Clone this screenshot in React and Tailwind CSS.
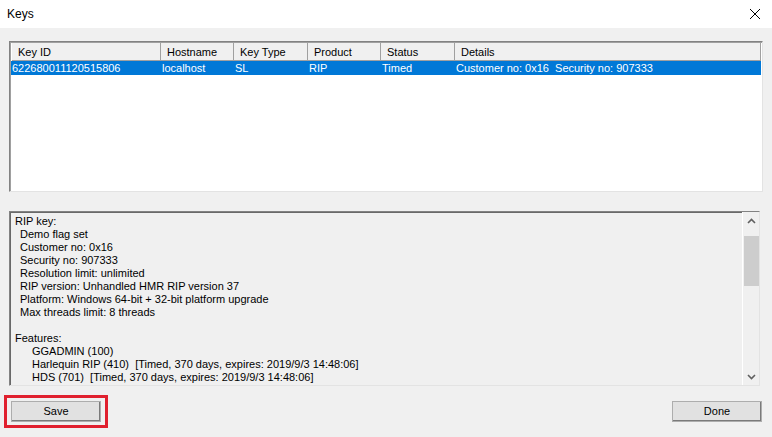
const cols = [
  { label: 'Key ID', w: 'w-[149px]', v: '622680011120515806' },
  { label: 'Hostname', w: 'w-[73px]', v: 'localhost' },
  { label: 'Key Type', w: 'w-[74px]', v: 'SL' },
  { label: 'Product', w: 'w-[73px]', v: 'RIP' },
  { label: 'Status', w: 'w-[74px]', v: 'Timed' },
  { label: 'Details', w: 'flex-1', v: 'Customer no: 0x16  Security no: 907333' },
];

const lines = [
  ['pl-[5px]', 'RIP key:'],
  ['pl-[10px]', 'Demo flag set'],
  ['pl-[10px]', 'Customer no: 0x16'],
  ['pl-[10px]', 'Security no: 907333'],
  ['pl-[10px]', 'Resolution limit: unlimited'],
  ['pl-[10px]', 'RIP version: Unhandled HMR RIP version 37'],
  ['pl-[10px]', 'Platform: Windows 64-bit + 32-bit platform upgrade'],
  ['pl-[10px]', 'Max threads limit: 8 threads'],
  ['pl-[10px]', ' '],
  ['pl-[5px]', 'Features:'],
  ['pl-[22px]', 'GGADMIN (100)'],
  ['pl-[22px]', 'Harlequin RIP (410)  [Timed, 370 days, expires: 2019/9/3 14:48:06]'],
  ['pl-[22px]', 'HDS (701)  [Timed, 370 days, expires: 2019/9/3 14:48:06]'],
];

function Btn({ children }) {
  return (
    <div className="w-[90px] h-[21px] flex items-center justify-center bg-[#e1e1e1] border border-[#adadad] shadow-[inset_-1px_-1px_0_#7a7a7a]">
      {children}
    </div>
  );
}

export default function App() {
  return (
    <div className="w-[772px] h-[437px] bg-[#f0f0f0] text-[11px] leading-[13px] text-black flex flex-col overflow-hidden" style={{ fontFamily: '"Liberation Sans", Arial, sans-serif' }}>
      <div className="h-[28px] bg-white flex items-center justify-between pl-[7px] pr-[8px] shrink-0">
        <span className="text-[12px]">Keys</span>
        <svg width="12" height="12" viewBox="0 0 12 12" className="mr-[3px]">
          <path d="M1 1 L11 11 M11 1 L1 11" stroke="#000" strokeWidth="1" />
        </svg>
      </div>

      <div className="pl-[9px] pr-[9px] pt-[13px]">
        <div className="h-[151px] bg-white border border-[#828282] border-r-[#e3e3e3] border-b-[#e3e3e3] shadow-[inset_1px_1px_0_#a0a0a0] p-[1px]">
          <div className="flex h-[18px] ml-[1px] border-b border-[#a0a0a0]">
            {cols.map((c, i) => (
              <div key={i} className={`${c.w} bg-[#f0f0f0] border-r border-[#a0a0a0] pl-[6px] flex items-center pt-[1px]`}>
                {c.label}
              </div>
            ))}
          </div>
          <div className="flex h-[14px] bg-[#0078d7] text-white">
            {cols.map((c, i) => (
              <div key={i} className={`${c.w} flex items-center whitespace-pre ${i === 0 ? 'pl-[1px]' : 'pl-[2px]'} ${i === 5 ? 'mr-[1px]' : ''}`}>
                {c.v}
              </div>
            ))}
          </div>
        </div>
      </div>

      <div className="pl-[9px] pr-[12px] pt-[19px]">
        <div className="h-[175px] bg-[#f0f0f0] border border-[#828282] border-r-[#e3e3e3] border-b-[#e3e3e3] shadow-[inset_1px_1px_0_#696969] flex">
          <div className="flex-1 pt-[3px] overflow-hidden whitespace-pre">
            {lines.map(([p, t], i) => (
              <div key={i} className={p}>{t}</div>
            ))}
          </div>
          <div className="w-[17px] bg-[#f0f0f0] border-l border-[#fff] flex flex-col items-center">
            <div className="h-[17px] flex items-center justify-center">
              <svg width="9" height="6" viewBox="0 0 9 6"><path d="M1 5 L4.5 1.5 L8 5" stroke="#606060" strokeWidth="1.6" fill="none" /></svg>
            </div>
            <div className="w-[15px] h-[50px] bg-[#cdcdcd] mt-[7px]" />
            <div className="flex-1" />
            <div className="h-[17px] flex items-center justify-center">
              <svg width="9" height="6" viewBox="0 0 9 6"><path d="M1 1 L4.5 4.5 L8 1" stroke="#606060" strokeWidth="1.6" fill="none" /></svg>
            </div>
          </div>
        </div>
      </div>

      <div className="flex justify-between items-center pl-[4px] pr-[10px] pt-[9px]">
        <div className="border-[3px] border-[#e0202e] px-[4px] py-[3px]">
          <Btn>Save</Btn>
        </div>
        <Btn>Done</Btn>
      </div>
    </div>
  );
}
